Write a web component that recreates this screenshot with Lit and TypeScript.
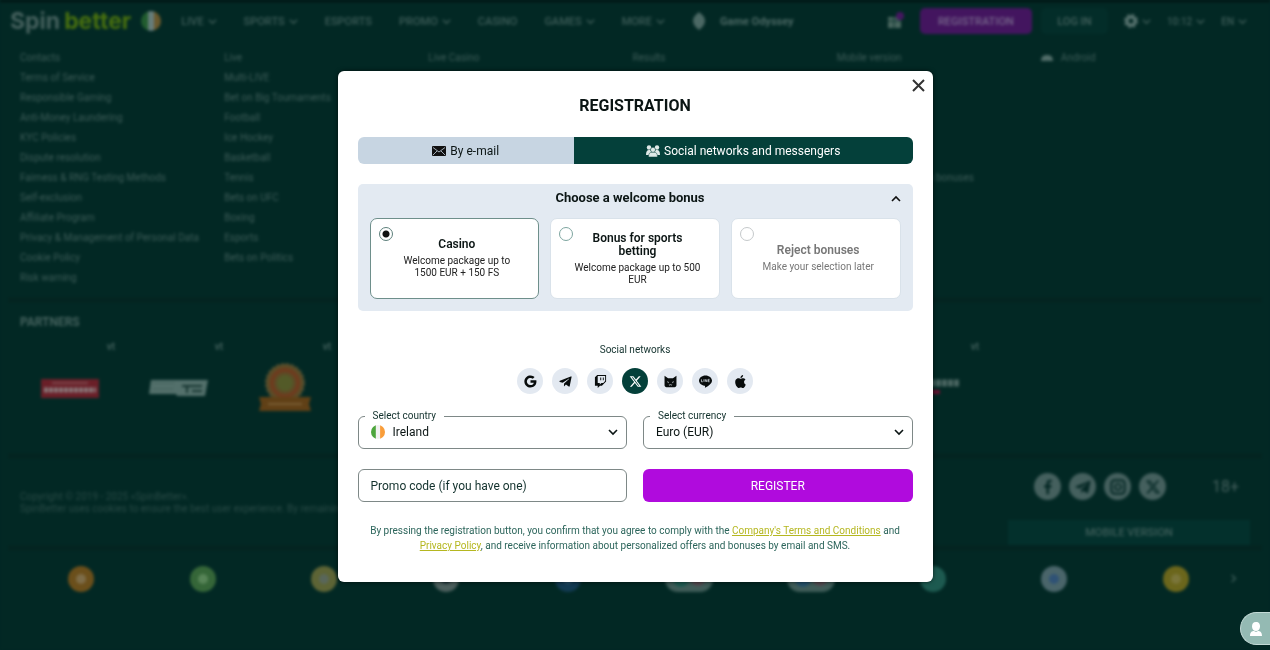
import { LitElement, html, svg, css, nothing } from "lit";
import { customElement, state } from "lit/decorators.js";
import { classMap } from "lit/directives/class-map.js";

const chevron = html`<svg class="chev" viewBox="0 0 10 10" aria-hidden="true">
  <path d="M1 3l4 4 4-4" fill="none" stroke="currentColor" stroke-width="1.600" />
</svg>`;

const flag = html`<svg class="flag" viewBox="0 0 20 20" aria-hidden="true">
  <defs><clipPath id="round"><circle cx="10" cy="10" r="10" /></clipPath></defs>
  <g clip-path="url(#round)">
    <path d="M0 0h7v20H0z" fill="#4da53c" />
    <path d="M7 0h6v20H7z" fill="#f1f1f1" />
    <path d="M13 0h7v20h-7z" fill="#f99d3a" />
  </g>
</svg>`;

const paths = {
  telegram: svg`<path d="M22.9 2.200 1.600 10.700c-1 .4-1 1.700 0 2l5.200 1.700L18 6.700c.5-.3.9.1.5.5L9.400 15.500l-.3 5.100c.5 0 .8-.2 1.100-.5l2.600-2.500 5.100 3.700c1 .5 1.600.2 1.900-.9l3.400-16.500c.3-1.300-.4-2-1.300-1.700z"/>`,
  x: svg`<path d="M18.244 2.250h3.308l-7.227 8.260 8.502 11.240H16.170l-5.214-6.817L4.990 21.750H1.680l7.730-8.835L1.254 2.250H8.080l4.713 6.231zm-1.161 17.520h1.833L7.084 4.126H5.117z"/>`,
};

const socials: { name: string; icon: unknown }[] = [
  {
    name: "Google",
    icon: svg`<path d="M12 9.900v4.400h6.100c-.6 2.500-2.800 4.300-6.100 4.300a6.600 6.600 0 1 1 4.300-11.600l3.200-3.200A11.200 11.200 0 1 0 12 23.200c6.500 0 11-4.500 11-11 0-.8-.1-1.500-.3-2.300z"/>`,
  },
  { name: "Telegram", icon: paths.telegram },
  {
    name: "Twitch",
    icon: svg`<path d="M11.571 4.714h1.715v5.143H11.570zm4.715 0H18v5.143h-1.714zM6 0L1.714 4.286v15.428h5.143V24l4.286-4.286h3.428L22.286 12V0zm14.571 11.143l-3.428 3.428h-3.429l-3 3v-3H6.857V1.714h13.714Z"/>`,
  },
  { name: "X", icon: paths.x },
  {
    name: "Meow",
    icon: svg`<path d="M1 1.500 7.500 6h9L23 1.500V19c0 2-1.500 3.500-3.500 3.500h-15C2.500 22.500 1 21 1 19z"/><path d="M6 12.500l3 1.300M18 12.500l-3 1.300M9 17.500c1 1.300 2.300 1.300 3 .2.700 1.100 2 1.100 3-.2" fill="none" stroke="#e3e9f1" stroke-width="1.400"/>`,
  },
  {
    name: "LINE",
    icon: svg`<path d="M24 10.300C24 5 18.600.7 12 .7S0 5 0 10.300c0 4.800 4.300 8.800 10 9.500.4.1.9.3 1.100.6.1.3.1.8 0 1.100l-.2 1c0 .3-.2 1.200 1.100.7s6.900-4.100 9.400-7C23.200 14.300 24 12.400 24 10.300z"/><path d="M4.500 8v4.500h2.500M9 8v4.500M11.500 12.800V8.200l3 4.300V8M19.500 8H17v4.500h2.500M17 10.300h2.200" fill="none" stroke="#e3e9f1" stroke-width="1.300"/>`,
  },
  {
    name: "Apple",
    icon: svg`<path d="M12.150 6.900c-.95 0-2.420-1.080-3.960-1.040-2.040.03-3.910 1.180-4.960 3.010-2.120 3.680-.55 9.100 1.520 12.090 1.010 1.450 2.210 3.090 3.790 3.040 1.520-.07 2.090-.99 3.940-.99 1.830 0 2.350.99 3.960.95 1.640-.03 2.680-1.480 3.680-2.950 1.160-1.690 1.640-3.330 1.660-3.420-.04-.01-3.180-1.220-3.220-4.860-.03-3.040 2.480-4.490 2.600-4.560-1.430-2.090-3.620-2.320-4.390-2.380-2-.16-3.680 1.090-4.620 1.090zM15.530 3.830c.84-1.010 1.400-2.430 1.250-3.830-1.210.05-2.660.8-3.530 1.820-.78.9-1.450 2.340-1.270 3.710 1.340.1 2.710-.69 3.550-1.700z"/>`,
  },
];

const bonuses = [
  { title: "Casino", text: "Welcome package up to 1500 EUR + 150 FS" },
  { title: "Bonus for sports betting", text: "Welcome package up to 500 EUR" },
  { title: "Reject bonuses", text: "Make your selection later", muted: true },
];

@customElement("registration-dialog")
class RegistrationDialog extends LitElement {
  @state() private bonus = 0;
  @state() private network = "X";

  static styles = css`
    :host {
      box-sizing: border-box;
      width: 595px;
      max-width: 100%;
      padding: 24px 20px 29px;
      border-radius: 6px;
      background: #fff;
      color: #0b1514;
      font-family: Roboto, sans-serif;
      font-size: 12px;
      position: relative;
      box-shadow: 0 0 4px #000a;
    }
    * { box-sizing: border-box; }
    button, select, input { font-family: inherit; font-size: 12px; margin: 0; }
    button { border: 0; padding: 0; cursor: pointer; }
    svg { display: block; flex: none; }
    .close {
      position: absolute;
      top: 8px;
      right: 8px;
      width: 13px;
      height: 13px;
      background: none;
      color: #333;
    }
    h2 { margin: 0; font-size: 16px; line-height: 22px; font-weight: 700; text-align: center; }
    .tabs {
      display: grid;
      grid-template-columns: 39fr 61fr;
      margin-top: 20px;
      height: 27px;
      border-radius: 6px;
      overflow: hidden;
    }
    .tab {
      display: flex;
      align-items: center;
      justify-content: center;
      gap: 4px;
      background: #c7d5e2;
      color: #0b1514;
    }
    .tab.on { background: #04403a; color: #fff; }
    .tab svg { width: 14px; height: 12px; }
    .bonus { margin-top: 20px; padding: 0 12px 12px; border-radius: 5px; background: #e3eaf2; }
    .bonus-head { display: grid; grid-template-columns: 1fr 10px; align-items: center; height: 34px; padding-bottom: 6px; }
    h3 { margin: 0; font-size: 13px; line-height: 20px; font-weight: 700; text-align: center; }
    .fold { background: none; width: 10px; height: 10px; color: #111; }
    .cards { display: grid; grid-template-columns: repeat(3, 1fr); gap: 11px; }
    .card {
      display: grid;
      grid-template-columns: 14px 1fr;
      height: 81px;
      padding: 8px 17px 8px 8px;
      border: 1px solid #d9e2ea;
      border-radius: 7px;
      background: #fff;
      text-align: center;
      cursor: pointer;
    }
    .card.on { border-color: #6e8f8b; }
    .card input {
      appearance: none;
      width: 14px;
      height: 14px;
      border: 1px solid #7da59f;
      border-radius: 50%;
      background: #fff;
    }
    .card input:checked { background: radial-gradient(#111 0 3px, #fff 4px); border-color: #5d807b; }
    .words { align-self: center; }
    .words b { display: block; font-size: 12px; line-height: 13px; font-weight: 600; }
    .words span { display: block; margin-top: 4px; font-size: 10px; line-height: 12px; color: #222; }
    .muted .words b, .muted .words span { color: #777; }
    .muted input { border-color: #c5c9cb; }
    .social-title { margin: 32px 0 0; font-size: 10px; line-height: 14px; text-align: center; color: #12312d; }
    .socials { display: flex; justify-content: center; gap: 9px; margin-top: 11px; }
    .social {
      display: grid;
      place-items: center;
      width: 26px;
      height: 26px;
      border-radius: 50%;
      background: #e3e9f1;
      color: #080c0c;
    }
    .social.on { background: #04403a; color: #fff; }
    .social svg { width: 13px; height: 13px; fill: currentColor; }
    .fields { display: grid; grid-template-columns: 1fr 1fr; column-gap: 16px; margin-top: 16px; }
    fieldset { min-width: 0; margin: 0; padding: 0 8px; border: 1px solid #7e8887; border-radius: 6px; }
    legend { margin-left: -2px; padding: 0 8px; font-size: 10px; line-height: 12px; color: #12312d; }
    .pick { display: grid; align-items: center; padding-bottom: 6px; }
    .pick > * { grid-area: 1 / 1; }
    .pick select { appearance: none; border: 0; background: none; height: 20px; padding: 0 16px 0 4px; color: #0b1514; outline: none; }
    .pick.with-flag select { padding-left: 26px; }
    .flag { width: 14px; height: 14px; margin-left: 4px; }
    .chev { width: 10px; height: 10px; justify-self: end; pointer-events: none; }
    .promo {
      height: 33px;
      margin-top: 20px;
      padding: 0 12px;
      border: 1px solid #7e8887;
      border-radius: 6px;
      min-width: 0;
      color: #12312d;
    }
    .promo::placeholder { color: #12312d; }
    .go { height: 33px; margin-top: 20px; border-radius: 6px; background: #b00bdd; color: #fff; }
    .terms { margin: 21px 10px 0; font-size: 10px; line-height: 15px; text-align: center; color: #2c655b; }
    .terms a { color: #b5b720; }
  `;

  render() {
    return html`
      <button class="close" aria-label="Close">
        <svg viewBox="0 0 13 13"><path d="M1 1l11 11M12 1 1 12" stroke="currentColor" stroke-width="2" /></svg>
      </button>
      <h2>REGISTRATION</h2>
      <div class="tabs" role="tablist">
        <button class="tab" role="tab">
          <svg viewBox="0 0 14 12"><rect y="1" width="14" height="10" rx="1" fill="#111" /><path d="M1 2.500 7 7l6-4.500M1 10l4-4M13 10 9 6" fill="none" stroke="#c7d5e2" stroke-width=".8" /></svg>
          By e-mail
        </button>
        <button class="tab on" role="tab" aria-selected="true">
          <svg viewBox="0 0 14 12" fill="#dfe9e7"><circle cx="3" cy="2.500" r="2.200" /><circle cx="11" cy="2.500" r="2.200" /><path d="M0 10C0 6.500 1 5 3 5s2.500 1 2 5zM14 10c0-3.500-1-5-3-5s-2.500 1-2 5z" /><path d="M2.500 12c0-3.500 1.200-5 4.500-5s4.500 1.500 4.500 5z" stroke="#04403a" stroke-width=".5" /><circle cx="7" cy="4.800" r="2.500" stroke="#04403a" stroke-width=".5" /></svg>
          Social networks and messengers
        </button>
      </div>
      <section class="bonus">
        <div class="bonus-head">
          <h3>Choose a welcome bonus</h3>
          <button class="fold" aria-label="Collapse">
            <svg viewBox="0 0 10 10"><path d="M1 8l4-4 4 4" fill="none" stroke="currentColor" stroke-width="1.600" /></svg>
          </button>
        </div>
        <div class="cards">
          ${bonuses.map(
            (b, i) => html`<label class=${classMap({ card: true, on: this.bonus === i, muted: !!b.muted })}>
              <input type="radio" name="bonus" .checked=${this.bonus === i} @change=${() => (this.bonus = i)} />
              <span class="words"><b>${b.title}</b><span>${b.text}</span></span>
            </label>`
          )}
        </div>
      </section>
      <p class="social-title">Social networks</p>
      <div class="socials">
        ${socials.map(
          (s) => html`<button
            class=${classMap({ social: true, on: this.network === s.name })}
            aria-label=${s.name}
            @click=${() => (this.network = s.name)}
          >
            <svg viewBox="0 0 24 24">${s.icon}</svg>
          </button>`
        )}
      </div>
      <div class="fields">
        <fieldset>
          <legend><label for="country">Select country</label></legend>
          <div class="pick with-flag">
            ${flag}<select id="country"><option>Ireland</option></select>${chevron}
          </div>
        </fieldset>
        <fieldset>
          <legend><label for="currency">Select currency</label></legend>
          <div class="pick"><select id="currency"><option>Euro (EUR)</option></select>${chevron}</div>
        </fieldset>
        <input class="promo" type="text" aria-label="Promo code" placeholder="Promo code (if you have one)" />
        <button class="go">REGISTER</button>
      </div>
      <p class="terms">
        By pressing the registration button, you confirm that you agree to comply with the
        <a href="#terms">Company's Terms and Conditions</a> and <a href="#privacy">Privacy Policy</a>, and receive
        information about personalized offers and bonuses by email and SMS.
      </p>
    `;
  }
}

const nav: [string, boolean][] = [
  ["LIVE", true],
  ["SPORTS", true],
  ["ESPORTS", false],
  ["PROMO", true],
  ["CASINO", false],
  ["GAMES", true],
  ["MORE", true],
];

const columns = [
  ["Contacts", "Terms of Service", "Responsible Gaming", "Anti-Money Laundering", "KYC Policies", "Dispute resolution", "Fairness & RNG Testing Methods", "Self-exclusion", "Affiliate Program", "Privacy & Management of Personal Data", "Cookie Policy", "Risk warning"],
  ["Live", "Multi-LIVE", "Bet on Big Tournaments", "Football", "Ice Hockey", "Basketball", "Tennis", "Bets on UFC", "Boxing", "Esports", "Bets on Politics"],
  ["Live Casino"],
  ["Results"],
  ["Mobile version", "", "", "", "", "", "Registration and login bonuses"],
  ["Android"],
];

const partners = ["red", "plate", "medal", "", "", "", "", "", "point"];

const coins: { ring: string; core: string; wide?: boolean }[] = [
  { ring: "#6b4f1b", core: "#7d6c48" },
  { ring: "#356638", core: "#578457" },
  { ring: "#5d6435", core: "#59665a" },
  { ring: "#4c5f5d", core: "#20363a" },
  { ring: "#123a52", core: "#2b5570" },
  { ring: "#3f5c58", core: "#1d5a50", wide: true },
  { ring: "#3f5c58", core: "#24506a", wide: true },
  { ring: "#1d5a50", core: "#1d5a50" },
  { ring: "#4a656a", core: "#2f5275" },
  { ring: "#6b661c", core: "#7a753a" },
];

@customElement("site-page")
class SitePage extends LitElement {
  static styles = css`
    :host {
      box-sizing: border-box;
      display: flex;
      flex-direction: column;
      min-height: 100vh;
      padding: 0 20px 40px;
      background: #022824;
      border-top: 2px solid #01100f;
      color: #3d5c58;
      font-family: Roboto, sans-serif;
      font-size: 10px;
      filter: blur(1.5px);
      overflow: hidden;
    }
    * { box-sizing: border-box; }
    a { color: inherit; text-decoration: none; }
    button { font: inherit; border: 0; padding: 0; color: inherit; }
    svg { display: block; flex: none; }
    header { display: flex; align-items: center; height: 38px; margin: 0 3px 0 -10px; font-size: 11px; font-weight: 500; white-space: nowrap; }
    .logo { font: 700 23px/28px Inter, sans-serif; color: #45605d; }
    .logo span { margin-left: 4px; color: #48700f; }
    header .flag { width: 20px; height: 20px; margin-left: 10px; opacity: .42; }
    nav { display: flex; gap: 27px; margin-left: 20px; }
    .item { display: flex; align-items: center; gap: 4px; }
    .chev { width: 9px; height: 9px; }
    .game { display: flex; align-items: center; gap: 14px; margin-left: 27px; font-weight: 700; color: #4b6864; }
    .game svg { width: 14px; height: 18px; }
    .tools { display: flex; align-items: center; margin-left: auto; gap: 16px; }
    .tools .item { font-size: 10px; }
    .gift { width: 18px; height: 18px; }
    .actions { display: flex; gap: 9px; }
    .reg { width: 112px; height: 26px; border-radius: 5px; background: #43155f; color: #75668a; }
    .login { width: 67px; height: 26px; border-radius: 5px; background: #032d29; color: #45625e; }
    .gear { width: 14px; height: 14px; }
    .links { display: grid; grid-template-columns: repeat(6, 1fr); margin-top: 8px; padding-right: 5px; }
    ul { margin: 0; padding: 0; list-style: none; }
    .links li { height: 20px; line-height: 20px; white-space: nowrap; }
    .droid { display: inline-block; width: 12px; height: 8px; margin-right: 8px; }
    .partners { margin: 9px -12px 0; padding: 10px 12px 0; border-top: 6px solid #032421; }
    h4 { margin: 0; font-size: 12px; line-height: 18px; font-weight: 600; color: #4a6662; }
    .logos { display: grid; grid-template-columns: repeat(9, 108px); margin-left: -4px; height: 102px; }
    .partner { display: grid; grid-template-rows: 30px 54px; justify-items: center; align-items: center; }
    .mark { margin-left: 82px; font-weight: 700; font-size: 10px; }
    .partner svg { width: 60px; height: 50px; }
    .legal { display: flex; justify-content: space-between; margin: 20px -12px 0; padding: 14px 12px 0; border-top: 6px solid #032421; }
    .copy { margin: 18px 0 0; flex: 1; min-width: 0; font-size: 10px; line-height: 12px; color: #294a46; white-space: nowrap; overflow: hidden; }
    .side { width: 242px; display: grid; gap: 20px; }
    .follow { display: flex; align-items: center; padding-left: 26px; }
    .follow a { display: grid; place-items: center; width: 27px; height: 27px; margin-right: 8px; border-radius: 50%; background: #45605e; color: #042724; }
    .follow svg { width: 16px; height: 16px; fill: currentColor; }
    .age { margin-left: auto; padding-right: 11px; font-size: 16px; color: #45605d; }
    .mobile { height: 25px; background: #03302c; font-size: 11px; font-weight: 500; color: #3f5e5a; }
    .pay { position: relative; margin: 0 -12px; padding: 15px 25px 0 12px; border-top: 6px solid #032421; }
    .coins { display: grid; grid-template-columns: repeat(10, 1fr); justify-items: center; }
    .coins svg { height: 26px; }
    .next { position: absolute; right: 24px; top: 23px; width: 9px; height: 9px; background: none; transform: rotate(-90deg); }
  `;

  private partner(kind: string) {
    if (kind === "red")
      return svg`<rect x="1" y="16" width="58" height="19" fill="#6a1f28"/><path d="M4 27h52" stroke="#8a7a7c" stroke-width="5" stroke-dasharray="4 1"/><path d="M12 20h36" stroke="#7a474c" stroke-width="2"/>`;
    if (kind === "plate")
      return svg`<path d="M3 17h57l-3 16H29l-1-2H1z" fill="#53706b"/><path d="M34 23h20M39 24v6M44 28h10" stroke="#14332f" stroke-width="2"/><path d="M5 20h22M4 26h22" stroke="#44605c"/>`;
    if (kind === "medal")
      return svg`<circle cx="29" cy="20" r="19" fill="#5c4b26" stroke="#4f5236" stroke-width="2" stroke-dasharray="3 2"/><circle cx="29" cy="20" r="13" fill="none" stroke="#6e3b1e" stroke-width="4"/><circle cx="29" cy="20" r="8" fill="#535a28"/><path d="M3 34h52l-2 7 2 7H3l2-7z" fill="#604016"/><path d="M12 41h34" stroke="#785c34" stroke-width="2"/>`;
    if (kind === "point")
      return svg`<path d="M8 20h48" stroke="#4a6561" stroke-width="7" stroke-dasharray="5 1"/><path d="M26 29h10" stroke="#6a1030" stroke-width="4"/>`;
    return nothing;
  }

  render() {
    return html`
      <header>
        <a class="logo" href="#home">Spin<span>better</span></a>
        ${flag}
        <nav>${nav.map(([t, more]) => html`<a class="item" href="#${t}">${t}${more ? chevron : nothing}</a>`)}</nav>
        <a class="game" href="#game">
          <svg viewBox="0 0 14 18"><path d="M7 0c5 4 6 6 6 9s-2 6-6 9C3 15 1 12 1 9s1-5 6-9z" fill="#4b6864" /></svg>
          Game Odyssey
        </a>
        <div class="tools">
          <svg class="gift" viewBox="0 0 18 18"><path d="M2 5h13v11H2z" fill="#49665f" /><path d="M8 5v11M2 9h13" stroke="#0a322e" stroke-width="1" /><circle cx="14" cy="4" r="4" fill="#451760" /></svg>
          <div class="actions"><button class="reg">REGISTRATION</button><button class="login">LOG IN</button></div>
          <a class="item" href="#settings">
            <svg class="gear" viewBox="0 0 14 14"><circle cx="7" cy="7" r="4" fill="none" stroke="#5a7571" stroke-width="3" /><circle cx="7" cy="7" r="6" fill="none" stroke="#5a7571" stroke-width="2" stroke-dasharray="2.700 2" /></svg>${chevron}
          </a>
          <a class="item" href="#time">10:12${chevron}</a>
          <a class="item" href="#lang">EN${chevron}</a>
        </div>
      </header>
      <div class="links">
        ${columns.map(
          (col) => html`<ul>
            ${col.map(
              (t) => html`<li>
                ${t
                  ? html`<a href="#${t}">${t === "Android"
                      ? html`<svg class="droid" viewBox="0 0 12 8"><path d="M0 8c0-4 2-6 6-6s6 2 6 6z" fill="#516d69" /></svg>`
                      : nothing}${t}</a>`
                  : nothing}
              </li>`
            )}
          </ul>`
        )}
      </div>
      <section class="partners">
        <h4>PARTNERS</h4>
        <div class="logos">
          ${partners.map((p) => html`<div class="partner">
            ${p ? html`<span class="mark">vt</span><svg viewBox="0 0 60 50">${this.partner(p)}</svg>` : nothing}
          </div>`)}
        </div>
      </section>
      <section class="legal">
        <p class="copy">
          Copyright © 2019 - 2025 «SpinBetter».<br />SpinBetter uses cookies to ensure the best user experience. By remaining
        </p>
        <div class="side">
          <div class="follow">
            <a href="#fb" aria-label="Facebook"><svg viewBox="0 0 24 24"><path d="M13.500 23V13h3.400l.5-4h-3.900V6.700c0-1.200.4-2 2-2h2V1.200C17 1.100 16 1 14.700 1 11.800 1 9.700 2.700 9.700 6v3H6.300v4h3.400v10z" /></svg></a>
            <a href="#tg" aria-label="Telegram"><svg viewBox="0 0 24 24">${paths.telegram}</svg></a>
            <a href="#ig" aria-label="Instagram"><svg viewBox="0 0 24 24"><rect x="2" y="2" width="20" height="20" rx="5" fill="none" stroke="currentColor" stroke-width="3" /><circle cx="12" cy="12" r="4.500" fill="none" stroke="currentColor" stroke-width="2.500" /></svg></a>
            <a href="#x" aria-label="X"><svg viewBox="0 0 24 24">${paths.x}</svg></a>
            <span class="age">18+</span>
          </div>
          <button class="mobile">MOBILE VERSION</button>
        </div>
      </section>
      <section class="pay">
        <div class="coins">
          ${coins.map(({ ring, core, wide }) =>
            wide
              ? html`<svg viewBox="0 0 48 26"><rect width="48" height="26" rx="13" fill=${ring} /><circle cx="16" cy="13" r="8" fill=${core} /><circle cx="33" cy="13" r="7" fill="#55484f" /></svg>`
              : html`<svg viewBox="0 0 26 26"><circle cx="13" cy="13" r="13" fill=${ring} /><circle cx="13" cy="13" r="5" fill=${core} /></svg>`
          )}
        </div>
        <button class="next" aria-label="Next">${chevron}</button>
      </section>
    `;
  }
}

@customElement("app-root")
class AppRoot extends LitElement {
  static styles = css`
    :host { display: block; background: #022724; overflow: hidden; }
    .overlay { position: fixed; inset: 0; display: flex; align-items: center; justify-content: center; padding-top: 3px; }
    .chat {
      position: fixed;
      right: 0;
      bottom: 5px;
      display: grid;
      place-items: center;
      width: 30px;
      height: 33px;
      padding: 0;
      border: 1px solid #c3dad6;
      border-right: 0;
      border-radius: 17px 0 0 17px;
      background: #94bab3;
    }
    .chat svg { display: block; width: 14px; height: 14px; }
  `;

  render() {
    return html`
      <site-page></site-page>
      <div class="overlay"><registration-dialog role="dialog" aria-label="Registration"></registration-dialog></div>
      <button class="chat" aria-label="Support">
        <svg viewBox="0 0 14 14" fill="#fff"><path d="M7 0c3 0 4 2 4 4.500S9.500 9 7 9 3 7 3 4.500 4 0 7 0z" /><path d="M1 14c0-4 2-5 4-5l2 1 2-1c2 0 4 1 4 5z" /></svg>
      </button>
    `;
  }
}
